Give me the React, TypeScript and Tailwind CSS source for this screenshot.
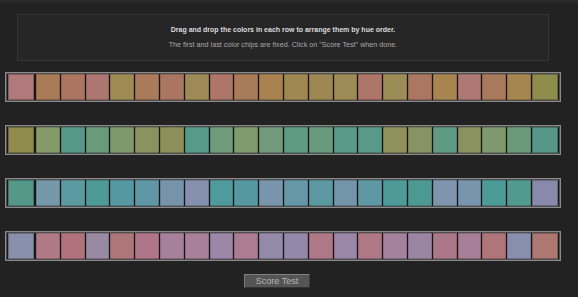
import React from "react";

// each row: first and last chips are fixed, the 20 in between are movable
const rows: string[][] = [
  [
    "#b07a7b",
    "#a97c57", "#ab7562", "#ad7670", "#9d8b53", "#a97b5a", "#aa7561", "#9e8a55", "#ae7668", "#a87c58", "#a8824f",
    "#a08852", "#9f8753", "#9c8b55", "#ae7668", "#9b8d55", "#aa7862", "#a8844e", "#ae7874", "#a87a5c", "#a6864f",
    "#8f8d4e",
  ],
  [
    "#8f8c4c",
    "#849a68", "#56998a", "#6a9b7a", "#7e9a6c", "#8a9360", "#8e905a", "#569a8a", "#6e9b79", "#7f9a6c", "#72997a",
    "#5f9b84", "#6a9a7c", "#5a9a88", "#59998a", "#8f905a", "#889462", "#5f9b84", "#8a9360", "#7e9a6c", "#6b9a7a",
    "#56978a",
  ],
  [
    "#54988a",
    "#7497aa", "#5a9aa0", "#4e9a96", "#5598a2", "#6097a6", "#7594aa", "#8590ae", "#4f9a9a", "#55989f", "#7895ab",
    "#6597a8", "#5b99a2", "#7295aa", "#5d98a4", "#4c9b98", "#4d9a92", "#7f95ad", "#7895ae", "#4c9b98", "#519a8e",
    "#8989ac",
  ],
  [
    "#8990ae",
    "#b07a84", "#b0737e", "#998aa4", "#ad7678", "#ae7688", "#a7819c", "#a8809a", "#9c87a6", "#ab7c92", "#928aa8",
    "#9488a8", "#ae7886", "#9a86a6", "#ae7884", "#a4829e", "#9a86a4", "#ab7888", "#a67e98", "#ae7678", "#888fae",
    "#ad7870",
  ],
];

const Chip = ({ color, fixed }: { color: string; fixed?: boolean }) => (
  <div
    className={
      fixed
        ? "w-[26px] h-full shrink-0 shadow-[inset_0_0_0_1px_rgba(0,0,0,0.25)]"
        : "flex-1 h-full border-l border-[#161616] shadow-[inset_1px_0_0_rgba(0,0,0,0.15),inset_-1px_0_0_rgba(0,0,0,0.15),inset_0_1px_0_rgba(0,0,0,0.15),inset_0_-1px_0_rgba(0,0,0,0.2)]"
    }
    style={{ backgroundColor: color }}
  />
);

const ChipRow = ({ chips }: { chips: string[] }) => {
  const first = chips[0];
  const last = chips[chips.length - 1];
  const middle = chips.slice(1, -1);
  return (
    <div className="mx-[5px] border border-[#8a8a8a]">
      <div className="border border-[#4e4e4e] bg-[#191919] px-px h-[28px] flex">
        <Chip color={first} fixed />
        <div className="flex-1 flex mx-px">
          {middle.map((c, i) => (
            <Chip key={i} color={c} />
          ))}
        </div>
        <Chip color={last} fixed />
      </div>
    </div>
  );
};

export default function App() {
  return (
    <div className="min-h-screen bg-[#222222] font-['Liberation_Sans',Arial,sans-serif]">
      <div className="h-[3px] bg-[#2a2a2a]" />
      <div className="w-[566px] pt-[11px]">
        <div className="mx-[17px] h-[47px] border border-[#363636] bg-[#262626] flex flex-col items-center pt-[10px]">
          <p className="text-[7px] leading-[10px] font-bold text-[#dcdcdc]">
            Drag and drop the colors in each row to arrange them by hue order.
          </p>
          <p className="mt-[5px] text-[7.2px] leading-[10px] text-[#a8a8a8]">
            The first and last color chips are fixed. Click on "Score Test" when done.
          </p>
        </div>

        <div className="mt-[11px] flex flex-col gap-[23px]">
          {rows.map((r, i) => (
            <ChipRow key={i} chips={r} />
          ))}
        </div>

        <button
          type="button"
          className="mt-[13px] ml-[244px] w-[66px] h-[14px] bg-[#555555] border border-t-[#808080] border-l-[#7a7a7a] border-r-[#3a3a3a] border-b-[#333333] text-[9px] leading-[12px] text-[#b4b4b4] flex items-center justify-center"
        >
          Score Test
        </button>
      </div>
    </div>
  );
}
